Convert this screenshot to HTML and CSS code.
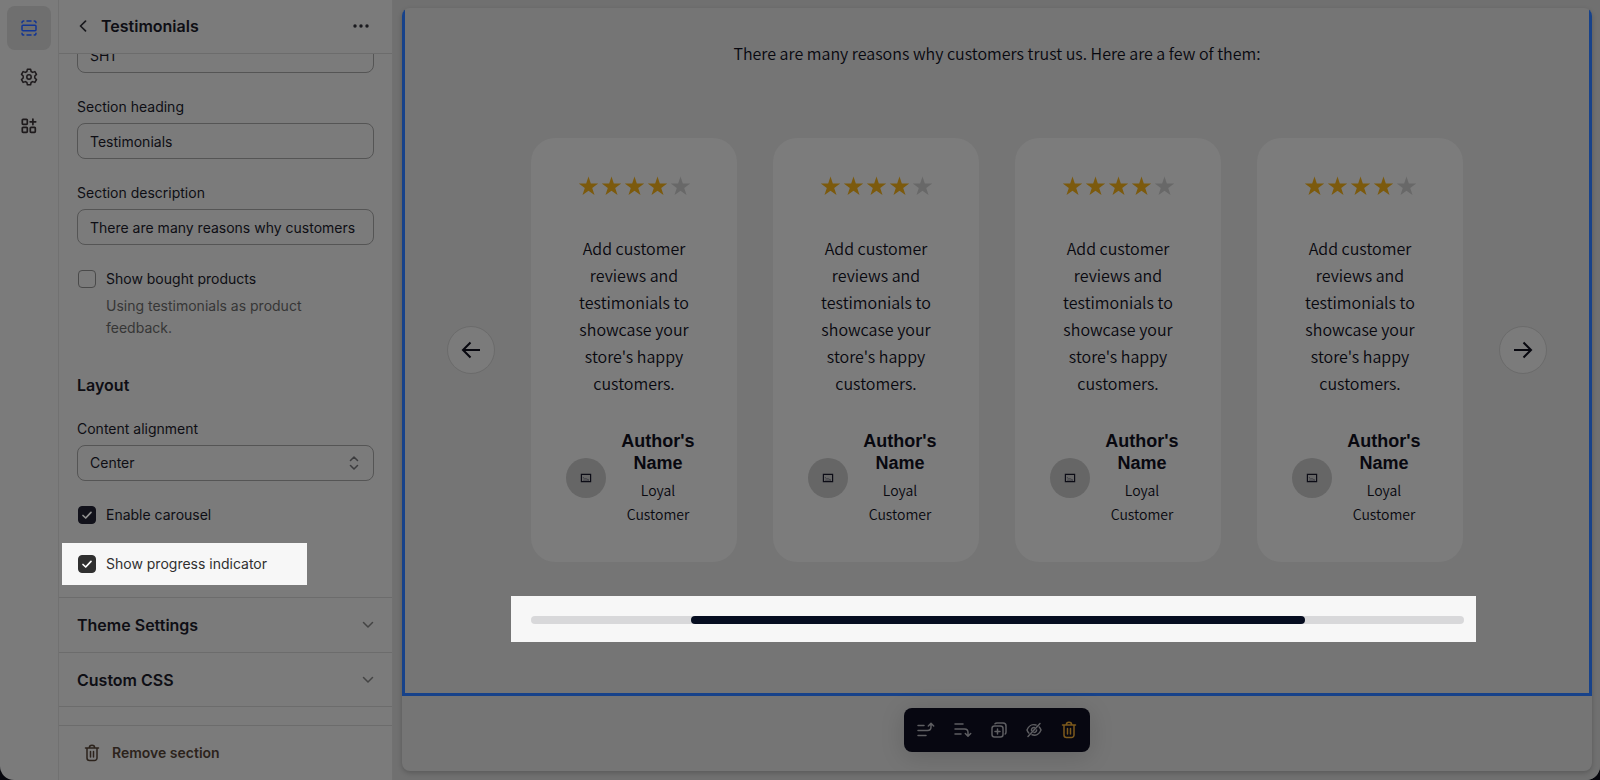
FILE: index.html
```html
<!DOCTYPE html>
<html lang="en">
<head>
  <meta charset="UTF-8">
  <meta name="viewport" content="width=device-width, initial-scale=1.0">
  <title>Testimonials</title>
  <link rel="stylesheet" href="styles.css">
</head>
<body>
  <!-- icons and stars used more than once -->
  <svg class="sprite" aria-hidden="true">
    <symbol id="stars" viewBox="0 0 115 24">
      <g fill="#7c5a0d">
        <path id="star" d="M11.500 2.500l2.300 7.100h7.400l-6 4.400 2.300 7-6-4.300-6 4.300 2.300-7-6-4.400h7.400z"/>
        <use href="#star" x="23"/>
        <use href="#star" x="46"/>
        <use href="#star" x="69"/>
      </g>
      <path fill="#686868" d="M103.500 2.500l2.300 7.100h7.400l-6 4.400 2.300 7-6-4.300-6 4.300 2.300-7-6-4.400h7.400z"/>
    </symbol>
    <symbol id="picture" viewBox="0 0 12 10">
      <path fill="none" stroke="#0c0c16" stroke-width="1.200" d="M1.400 1.400h9.200v7.200H1.400z"/>
      <path fill="none" stroke="#3c3c44" stroke-width=".8" d="M3 4l1.500 2L6 5.500 9 7.200M3 7.200h6"/>
    </symbol>
    <symbol id="chevron" viewBox="0 0 12 8">
      <path fill="none" stroke="#444" stroke-width="1.500" stroke-linecap="round" stroke-linejoin="round" d="M1.500 1.500L6 6l4.500-4.500"/>
    </symbol>
    <symbol id="trash" viewBox="0 0 16 18">
      <path fill="none" stroke="currentColor" stroke-width="1.500" stroke-linecap="round" stroke-linejoin="round" d="M1.500 4h13M5.300 4c0-3.600 5.400-3.600 5.400 0M3 4v10a2.500 2.500 0 0 0 2.500 2.500h5A2.500 2.500 0 0 0 13 14V4M6.500 7.500v5.500M9.500 7.500v5.500"/>
    </symbol>
  </svg>

  <div class="window">
    <nav class="rail">
      <button class="rail-button active" aria-label="Sections">
        <svg width="16" height="16" viewBox="0 0 16 16" fill="none" stroke="#123594" stroke-width="1.500" stroke-linecap="round">
          <rect x="1" y="5.300" width="14" height="5.400" rx="1"/>
          <path d="M1 2.800C1 1.600 1.600 1 2.800 1M6 1h4M13.200 1c1.200 0 1.800.6 1.800 1.800M1 13.200c0 1.200.6 1.800 1.800 1.800M6 15h4M13.200 15c1.200 0 1.800-.6 1.800-1.800"/>
        </svg>
      </button>
      <button class="rail-button" aria-label="Theme settings">
        <svg width="18" height="18" viewBox="0 0 18 18" fill="none" stroke="#1e1a1c" stroke-width="1.500" stroke-linejoin="round">
          <path d="M7.400 1.200h3.200l.5 2.300 1.500.9 2.300-.8 1.600 2.800L14.800 8v2l1.700 1.600-1.600 2.800-2.300-.8-1.500.9-.5 2.300H7.400l-.5-2.300-1.500-.9-2.300.8-1.600-2.800L3.200 10V8L1.500 6.400l1.600-2.800 2.300.8 1.500-.9z"/>
          <circle cx="9" cy="9" r="2.200"/>
        </svg>
      </button>
      <button class="rail-button" aria-label="Apps">
        <svg width="16" height="16" viewBox="0 0 16 16" fill="none" stroke="#1e1a1c" stroke-width="1.700" stroke-linecap="round">
          <rect x="1.300" y="1.300" width="5" height="5" rx=".8"/>
          <rect x="1.300" y="9.300" width="5" height="5" rx=".8"/>
          <rect x="9.300" y="9.300" width="5" height="5" rx=".8"/>
          <path d="M11.900 1v5.600M9.100 3.800h5.600"/>
        </svg>
      </button>
    </nav>

    <aside class="sidebar">
      <header class="sidebar-header">
        <button class="icon-button" aria-label="Back">
          <svg width="8" height="12" viewBox="0 0 8 12" fill="none" stroke="#1a1a1e" stroke-width="1.700" stroke-linecap="round" stroke-linejoin="round"><path d="M6.500 1.200L1.500 6l5 4.800"/></svg>
        </button>
        <h1>Testimonials</h1>
        <button class="icon-button" aria-label="More actions">
          <svg width="16" height="4" viewBox="0 0 16 4" fill="#1a1a1e"><circle cx="2" cy="2" r="1.700"/><circle cx="8" cy="2" r="1.700"/><circle cx="14" cy="2" r="1.700"/></svg>
        </button>
      </header>

      <div class="settings">
        <div class="fields">
          <input class="input clipped" type="text" value="SH1" aria-label="Section subheading">

          <label class="label" for="heading">Section heading</label>
          <input class="input" id="heading" type="text" value="Testimonials">

          <label class="label" for="description">Section description</label>
          <input class="input" id="description" type="text" value="There are many reasons why customers">

          <div class="check">
            <input type="checkbox" id="bought">
            <label for="bought">Show bought products</label>
          </div>
          <p class="help">Using testimonials as product feedback.</p>

          <h2>Layout</h2>

          <label class="label" for="alignment">Content alignment</label>
          <div class="select">
            <select class="input" id="alignment">
              <option>Left</option>
              <option selected>Center</option>
              <option>Right</option>
            </select>
            <svg width="10" height="14" viewBox="0 0 10 14" fill="none" stroke="#3c3c3e" stroke-width="1.500" stroke-linecap="round" stroke-linejoin="round"><path d="M1.500 4.500L5 1l3.500 3.500M1.500 9.500L5 13l3.500-3.500"/></svg>
          </div>

          <div class="check">
            <input type="checkbox" id="carousel" checked>
            <label for="carousel">Enable carousel</label>
          </div>
          <div class="check spotlight">
            <input type="checkbox" id="progress" checked>
            <label for="progress">Show progress indicator</label>
          </div>
        </div>

        <button class="accordion">Theme Settings <svg width="12" height="8"><use href="#chevron"/></svg></button>
        <button class="accordion">Custom CSS <svg width="12" height="8"><use href="#chevron"/></svg></button>
      </div>

      <footer class="sidebar-footer">
        <button class="remove"><svg width="16" height="18"><use href="#trash"/></svg> Remove section</button>
      </footer>
    </aside>

    <main class="canvas">
      <div class="preview">
        <section class="testimonials">
          <p class="intro">There are many reasons why customers trust us. Here are a few of them:</p>

          <div class="carousel">
            <button class="arrow" aria-label="Previous">
              <svg width="20" height="18" viewBox="0 0 20 18" fill="none" stroke="#08080f" stroke-width="2"><path d="M19 9H2M9.500 1.500L2 9l7.500 7.500"/></svg>
            </button>

            <div class="cards">
              <article class="card">
                <svg class="stars" width="115" height="24" role="img" aria-label="4 of 5"><use href="#stars"/></svg>
                <p class="review">Add customer reviews and testimonials to showcase your store's happy customers.</p>
                <div class="author">
                  <div class="avatar"><svg width="12" height="10"><use href="#picture"/></svg></div>
                  <div class="author-text">
                    <h3>Author's Name</h3>
                    <p>Loyal Customer</p>
                  </div>
                </div>
              </article>
              <article class="card">
                <svg class="stars" width="115" height="24" role="img" aria-label="4 of 5"><use href="#stars"/></svg>
                <p class="review">Add customer reviews and testimonials to showcase your store's happy customers.</p>
                <div class="author">
                  <div class="avatar"><svg width="12" height="10"><use href="#picture"/></svg></div>
                  <div class="author-text">
                    <h3>Author's Name</h3>
                    <p>Loyal Customer</p>
                  </div>
                </div>
              </article>
              <article class="card">
                <svg class="stars" width="115" height="24" role="img" aria-label="4 of 5"><use href="#stars"/></svg>
                <p class="review">Add customer reviews and testimonials to showcase your store's happy customers.</p>
                <div class="author">
                  <div class="avatar"><svg width="12" height="10"><use href="#picture"/></svg></div>
                  <div class="author-text">
                    <h3>Author's Name</h3>
                    <p>Loyal Customer</p>
                  </div>
                </div>
              </article>
              <article class="card">
                <svg class="stars" width="115" height="24" role="img" aria-label="4 of 5"><use href="#stars"/></svg>
                <p class="review">Add customer reviews and testimonials to showcase your store's happy customers.</p>
                <div class="author">
                  <div class="avatar"><svg width="12" height="10"><use href="#picture"/></svg></div>
                  <div class="author-text">
                    <h3>Author's Name</h3>
                    <p>Loyal Customer</p>
                  </div>
                </div>
              </article>
            </div>

            <button class="arrow" aria-label="Next">
              <svg width="20" height="18" viewBox="0 0 20 18" fill="none" stroke="#08080f" stroke-width="2"><path d="M1 9h17M10.500 1.500L18 9l-7.500 7.500"/></svg>
            </button>
          </div>

          <div class="indicator">
            <div class="track">
              <div class="thumb" style="margin-left: 17.1%; width: 65.9%"></div>
            </div>
          </div>
        </section>

        <div class="toolbar">
          <button aria-label="Move up">
            <svg width="18" height="16" viewBox="0 0 18 16" fill="none" stroke="currentColor" stroke-width="1.500" stroke-linecap="round" stroke-linejoin="round"><path d="M1 3.500h6M1 8.500h9.500c2.500 0 3.500-1.500 3.500-3.500V2M11.300 4L14 1.300 16.700 4M1 13.500h8"/></svg>
          </button>
          <button aria-label="Move down">
            <svg width="18" height="16" viewBox="0 0 18 16" fill="none" stroke="currentColor" stroke-width="1.500" stroke-linecap="round" stroke-linejoin="round"><path d="M1 2h8M1 7h9.500c2.500 0 3.500 1.500 3.500 3.500V14M11.300 11.500l2.700 2.700 2.700-2.700M1 12h6"/></svg>
          </button>
          <button aria-label="Duplicate">
            <svg width="16" height="16" viewBox="0 0 16 16" fill="none" stroke="currentColor" stroke-width="1.500" stroke-linecap="round" stroke-linejoin="round"><rect x="1" y="4" width="11" height="11" rx="2.500"/><path d="M6.500 7v5M4 9.500h5M4 1.800C4.500 1.200 5 1 6 1h6a3 3 0 0 1 3 3v6c0 1-.2 1.500-.8 2"/></svg>
          </button>
          <button aria-label="Hide">
            <svg width="16" height="16" viewBox="0 0 16 16" fill="none" stroke="currentColor" stroke-width="1.500" stroke-linecap="round" stroke-linejoin="round"><path d="M14 1.500L2 14.500M10 3C6 1.800 2.500 4 1 8c.4 1.200 1 2.200 1.800 3M13.200 5c.8.8 1.400 1.800 1.800 3-1.500 4-5 6-9 4.800M5.500 8.500A2.600 2.600 0 0 1 8.300 5.500M10.600 8A2.600 2.600 0 0 1 8 10.600"/></svg>
          </button>
          <button class="delete" aria-label="Delete">
            <svg width="16" height="18"><use href="#trash"/></svg>
          </button>
        </div>
      </div>
    </main>
  </div>
</body>
</html>
```
FILE: styles.css
```css
* {
  box-sizing: border-box;
}

body {
  margin: 0;
  background: #07070d;
  color: #0e0e14;
  font-family: Inter, sans-serif;
  font-size: 14px;
  line-height: 20px;
}

h1, h2, h3, p {
  margin: 0;
}

button, input, select {
  font: inherit;
  color: inherit;
}

button {
  display: flex;
  align-items: center;
  padding: 0;
  border: none;
  background: none;
  cursor: pointer;
}

svg {
  display: block;
}

.sprite {
  position: absolute;
  width: 0;
  height: 0;
}

.window {
  display: flex;
  height: 100vh;
  overflow: hidden;
  border-radius: 0 0 14px 14px;
  background: #7b7b7b;
}

/* Left rail */
.rail {
  display: flex;
  flex-direction: column;
  align-items: center;
  gap: 5px;
  width: 59px;
  padding-top: 6px;
  border-right: 1px solid #717171;
}

.rail-button {
  justify-content: center;
  width: 44px;
  height: 44px;
  border-radius: 8px;
}

.rail-button.active {
  background: #6f6f6f;
}

/* Settings panel */
.sidebar {
  display: flex;
  flex-direction: column;
  width: 334px;
  border-right: 1px solid #717171;
}

.sidebar-header {
  display: flex;
  align-items: center;
  gap: 14px;
  height: 54px;
  padding: 0 23px 2px 20px;
  border-bottom: 1px solid #6c6c6c;
}

.sidebar-header h1 {
  flex: 1;
  font-size: 16px;
  font-weight: 600;
}

.settings {
  flex: 1;
  min-height: 0;
  overflow: hidden;
}

.fields {
  padding: 0 18px 12px;
}

.label {
  display: block;
  margin: 24px 0 6px;
}

.input {
  display: block;
  width: 100%;
  height: 36px;
  padding: 0 12px;
  border: 1px solid #555;
  border-radius: 8px;
  background: transparent;
  appearance: none;
}

.input.clipped {
  margin-top: -17px;
}

.select {
  position: relative;
}

.select svg {
  position: absolute;
  right: 15px;
  top: 11px;
  pointer-events: none;
}

.check {
  display: flex;
  align-items: center;
  gap: 10px;
  margin-top: 23px;
  line-height: 22px;
}

.check input {
  width: 18px;
  height: 18px;
  margin: 0 0 0 1px;
  border: 1px solid #4a4a4a;
  border-radius: 4px;
  appearance: none;
}

.check input:checked {
  border-color: #11111a;
  background: #11111a url("data:image/svg+xml,%3Csvg xmlns='http://www.w3.org/2000/svg' viewBox='0 0 16 16' fill='none' stroke='%23909090' stroke-width='1.7' stroke-linecap='round' stroke-linejoin='round'%3E%3Cpath d='M4 8.500l2.700 2.500L12 5.300'/%3E%3C/svg%3E");
}

.check.spotlight {
  width: fit-content;
  margin: 17px 0 0 -15px;
  padding: 10px 40px 10px 15px;
  background: #f7f7f7;
  color: #303030;
}

.spotlight input:checked {
  border-color: #303030;
  background-color: #303030;
  background-image: url("data:image/svg+xml,%3Csvg xmlns='http://www.w3.org/2000/svg' viewBox='0 0 16 16' fill='none' stroke='%23fff' stroke-width='1.7' stroke-linecap='round' stroke-linejoin='round'%3E%3Cpath d='M4 8.500l2.700 2.500L12 5.300'/%3E%3C/svg%3E");
}

.help {
  margin: 5px 0 0 29px;
  padding-right: 24px;
  color: #363636;
  line-height: 22px;
}

h2 {
  margin-top: 34px;
  font-size: 16px;
  font-weight: 600;
  line-height: 24px;
}

h2 + .label {
  margin-top: 22px;
}

.accordion {
  justify-content: space-between;
  width: 100%;
  height: 55px;
  padding: 0 18px;
  border-top: 1px solid #6c6c6c;
  font-size: 16px;
  font-weight: 600;
}

.accordion:last-child {
  border-bottom: 1px solid #6c6c6c;
}

.sidebar-footer {
  display: flex;
  align-items: center;
  height: 55px;
  padding: 0 25px;
  border-top: 1px solid #6c6c6c;
}

.remove {
  gap: 12px;
  color: #2c231c;
  font-weight: 600;
}

/* Preview */
.canvas {
  flex: 1;
  min-width: 0;
  padding: 8px 8px 9px 9px;
  background: #707070;
}

.preview {
  display: flex;
  flex-direction: column;
  height: 100%;
  overflow: hidden;
  border-radius: 8px;
  background: #757575;
  box-shadow: 0 2px 5px rgba(0, 0, 0, 0.2);
}

.testimonials {
  padding: 32px 42px 51px;
  border: 3px solid #17428a;
  border-top: none;
  color: #08080f;
  font-family: "Noto Sans CJK JP", sans-serif;
  font-size: 16px;
  font-weight: 350;
  line-height: 27px;
  text-align: center;
}

.intro {
  margin-bottom: 71px;
}

.carousel {
  display: flex;
  align-items: center;
  gap: 36px;
}

.arrow {
  justify-content: center;
  flex: none;
  width: 48px;
  height: 48px;
  border: 1px solid #6b6b6b;
  border-radius: 50%;
  background: #7b7b7b;
}

.cards {
  display: grid;
  flex: 1;
  grid-template-columns: repeat(4, 1fr);
  gap: 36px;
}

.card {
  padding: 36px 35px;
  border-radius: 24px;
  background: #7c7c7c;
}

.stars {
  margin: 0 auto 37px;
}

.author {
  display: flex;
  align-items: center;
  gap: 8px;
  margin-top: 33px;
}

.avatar {
  display: flex;
  align-items: center;
  justify-content: center;
  flex: none;
  width: 40px;
  height: 40px;
  border-radius: 50%;
  background: #666;
}

.author-text {
  flex: 1;
  font-size: 14px;
  line-height: 24px;
}

.author-text h3 {
  margin-bottom: 4px;
  font-family: "Liberation Sans", sans-serif;
  font-size: 18px;
  font-weight: 700;
  line-height: 22px;
}

.indicator {
  margin: 34px 71px 0 64px;
  padding: 20px 12px 18px 20px;
  background: #f7f7f7;
}

.track {
  border-radius: 4px;
  background: #d8d8da;
}

.thumb {
  height: 8px;
  border-radius: 4px;
  background: #060d20;
}

.toolbar {
  display: flex;
  align-items: center;
  justify-content: space-between;
  align-self: center;
  width: 186px;
  height: 44px;
  margin-top: 12px;
  padding: 0 13px;
  border-radius: 8px;
  background: #070711;
  color: #5e5e62;
  box-shadow: 0 4px 24px rgba(0, 0, 0, 0.15);
}

.toolbar .delete {
  color: #7d5a1c;
}
```
